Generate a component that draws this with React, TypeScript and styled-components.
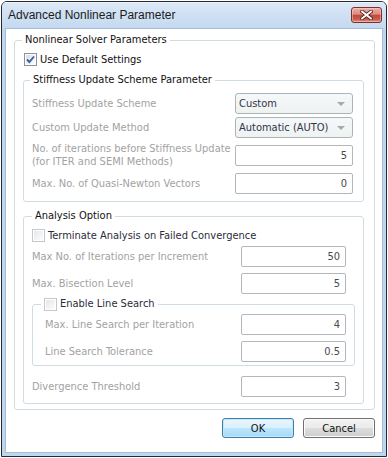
import React from "react";
import styled, { createGlobalStyle } from "styled-components";

const Global = createGlobalStyle`
  html, body { margin: 0; padding: 0; background: #ffffff; }
  #root { width: 388px; height: 458px; }
`;

const UI_FONT = `"DejaVu Sans Condensed", "DejaVu Sans", sans-serif`;

const Window = styled.div`
  box-sizing: border-box;
  width: 386px;
  height: 456px;
  margin: 1px 0 0 1px;
  border: 1px solid #262a30;
  border-radius: 6px 6px 0 0;
  background: #bfd6ef;
  display: flex;
  flex-direction: column;
  overflow: hidden;
`;

const TitleBar = styled.div`
  flex: none;
  height: 26px;
  display: flex;
  align-items: center;
  justify-content: space-between;
  padding: 0 4px 0 6px;
  background: linear-gradient(#dce8f6, #c4d9f0);
  box-shadow: inset 0 1px 0 #eef4fb;
`;

const Title = styled.span`
  font: 12px "Liberation Sans", Arial, sans-serif;
  color: #1b1b1b;
`;

const CloseButton = styled.div`
  box-sizing: border-box;
  width: 31px;
  height: 16px;
  border: 1px solid #7b3028;
  border-radius: 3px;
  background: linear-gradient(#eab0a6 0%, #dd8a7e 45%, #c2463b 50%, #c95a4e 80%, #df9486 100%);
  box-shadow: inset 0 0 0 1px rgba(255, 220, 210, 0.45);
  display: flex;
  align-items: center;
  justify-content: center;
`;

const Frame = styled.div`
  flex: 1;
  display: flex;
  padding: 0 3px 3px 3px;
`;

const Client = styled.div`
  flex: 1;
  box-sizing: border-box;
  border: 1px solid #a7bcd4;
  background: #ffffff;
  display: flex;
  flex-direction: column;
  padding: 4px 7px 0 8px;
  font-family: ${UI_FONT};
  font-size: 11px;
`;

const Group = styled.fieldset<{ $mt?: number; $ml?: number; $mr?: number; $mb?: number }>`
  margin: ${(p) => p.$mt ?? 0}px ${(p) => p.$mr ?? 0}px ${(p) => p.$mb ?? 0}px ${(p) => p.$ml ?? 0}px;
  padding: 0;
  min-width: 0;
  border: 1px solid #d0dce3;
  border-radius: 3px;
`;

const Legend = styled.legend<{ $offset: number }>`
  margin-left: ${(p) => p.$offset}px;
  padding: 0 3px;
  line-height: 14px;
  height: 14px;
  color: #111;
  display: flex;
  align-items: center;
  gap: 3px;
`;

const GroupBody = styled.div<{ $pt: number; $pr: number; $pb: number; $pl: number }>`
  display: flex;
  flex-direction: column;
  padding: ${(p) => p.$pt}px ${(p) => p.$pr}px ${(p) => p.$pb}px ${(p) => p.$pl}px;
`;

const CheckRow = styled.label<{ $mt?: number; $ml?: number; $dim?: boolean }>`
  display: flex;
  align-items: center;
  gap: 3px;
  height: 14px;
  margin-top: ${(p) => p.$mt ?? 0}px;
  margin-left: ${(p) => p.$ml ?? 0}px;
  color: ${(p) => (p.$dim ? "#2c2c3a" : "#111")};
`;

const Box = styled.span<{ $disabled?: boolean }>`
  box-sizing: border-box;
  width: 13px;
  height: 13px;
  flex: none;
  border: 1px solid ${(p) => (p.$disabled ? "#c3c8cc" : "#8e9297")};
  background: ${(p) =>
    p.$disabled
      ? "linear-gradient(135deg, #e1e4e7 0%, #f2f3f4 55%, #ffffff 100%)"
      : "linear-gradient(135deg, #d6dbe2 0%, #eef1f4 55%, #ffffff 100%)"};
  box-shadow: inset 0 0 0 1px #ffffff;
  display: flex;
  align-items: center;
  justify-content: center;
`;

const Row = styled.div<{ $mt?: number; $ctrl: number; $pr?: number; $h?: number }>`
  display: grid;
  grid-template-columns: 1fr ${(p) => p.$ctrl}px;
  align-items: center;
  min-height: ${(p) => p.$h ?? 21}px;
  margin-top: ${(p) => p.$mt ?? 0}px;
  padding-right: ${(p) => p.$pr ?? 0}px;
`;

const Label = styled.span`
  color: #a2a2a2;
  line-height: 13px;
  white-space: pre-line;
`;

const Combo = styled.div`
  box-sizing: border-box;
  height: 21px;
  border: 1px solid #acb5b6;
  border-radius: 3px;
  background: linear-gradient(#f5f8f8, #eef3f2);
  display: flex;
  align-items: center;
  justify-content: space-between;
  padding: 0 7px 0 3px;
  color: #33334a;
`;

const Arrow = styled.span`
  width: 0;
  height: 0;
  border-left: 4px solid transparent;
  border-right: 4px solid transparent;
  border-top: 4px solid #a9a9a9;
`;

const NumBox = styled.input`
  box-sizing: border-box;
  width: 100%;
  height: 21px;
  margin: 0;
  border: 1px solid #b4b7ba;
  border-radius: 2px;
  background: #ffffff;
  padding: 0 5px 0 0;
  text-align: right;
  font-family: ${UI_FONT};
  font-size: 11px;
  color: #4a4a4a;
  outline: none;
`;

const ButtonBar = styled.div`
  display: flex;
  justify-content: flex-end;
  gap: 9px;
  margin-top: 8px;
`;

const Button = styled.button<{ $default?: boolean }>`
  box-sizing: border-box;
  width: 72px;
  height: 20px;
  margin: 0;
  padding: 0;
  border: 1px solid ${(p) => (p.$default ? "#3c7fb1" : "#707070")};
  border-radius: 3px;
  background: ${(p) =>
    p.$default
      ? "linear-gradient(#eaf6fd 0%, #d9f0fc 50%, #bee6fd 50%, #a7d9f5 100%)"
      : "linear-gradient(#f2f2f2 0%, #ebebeb 50%, #dddddd 50%, #cfcfcf 100%)"};
  box-shadow: inset 0 0 0 1px ${(p) => (p.$default ? "#c6e6f8" : "#fcfcfc")};
  font-family: ${UI_FONT};
  font-size: 11px;
  color: #111;
`;

const Check = () => (
  <svg width="9" height="9" viewBox="0 0 9 9">
    <path d="M1 4.5 L3.4 7 L8 1.5" fill="none" stroke="#3d5fa8" strokeWidth="1.9" />
  </svg>
);

const CloseX = () => (
  <svg width="13" height="10" viewBox="0 0 13 10">
    <path d="M2 1.5 L11 8.5 M11 1.5 L2 8.5" stroke="#5b2520" strokeWidth="3.6" strokeLinecap="square" />
    <path d="M2 1.5 L11 8.5 M11 1.5 L2 8.5" stroke="#ffffff" strokeWidth="1.8" strokeLinecap="square" />
  </svg>
);

export default function App() {
  return (
    <>
      <Global />
      <Window>
        <TitleBar>
          <Title>Advanced Nonlinear Parameter</Title>
          <CloseButton>
            <CloseX />
          </CloseButton>
        </TitleBar>
        <Frame>
          <Client>
            <Group>
              <Legend $offset={7}>Nonlinear Solver Parameters</Legend>
              <GroupBody $pt={5} $pr={10} $pb={5} $pl={8}>
                <CheckRow $ml={1}>
                  <Box>
                    <Check />
                  </Box>
                  Use Default Settings
                </CheckRow>

                <Group $mt={7}>
                  <Legend $offset={6}>Stiffness Update Scheme Parameter</Legend>
                  <GroupBody $pt={6} $pr={10} $pb={7} $pl={8}>
                    <Row $ctrl={118}>
                      <Label>Stiffness Update Scheme</Label>
                      <Combo>
                        Custom
                        <Arrow />
                      </Combo>
                    </Row>
                    <Row $ctrl={118} $mt={3}>
                      <Label>Custom Update Method</Label>
                      <Combo>
                        Automatic (AUTO)
                        <Arrow />
                      </Combo>
                    </Row>
                    <Row $ctrl={118} $mt={4} $h={26}>
                      <Label>{"No. of iterations before Stiffness Update\n(for ITER and SEMI Methods)"}</Label>
                      <NumBox readOnly value="5" />
                    </Row>
                    <Row $ctrl={118} $mt={5}>
                      <Label>Max. No. of Quasi-Newton Vectors</Label>
                      <NumBox readOnly value="0" />
                    </Row>
                  </GroupBody>
                </Group>

                <Group $mt={7}>
                  <Legend $offset={8}>Analysis Option</Legend>
                  <GroupBody $pt={5} $pr={8} $pb={6} $pl={8}>
                    <CheckRow $ml={0} $dim>
                      <Box $disabled />
                      Terminate Analysis on Failed Convergence
                    </CheckRow>
                    <Row $ctrl={105} $mt={4} $pr={9}>
                      <Label>Max No. of Iterations per Increment</Label>
                      <NumBox readOnly value="50" />
                    </Row>
                    <Row $ctrl={105} $mt={6} $pr={9}>
                      <Label>Max. Bisection Level</Label>
                      <NumBox readOnly value="5" />
                    </Row>

                    <Group $mt={3}>
                      <Legend $offset={8}>
                        <Box $disabled />
                        <span style={{ color: "#2c2c3a" }}>Enable Line Search</span>
                      </Legend>
                      <GroupBody $pt={3} $pr={8} $pb={3} $pl={12}>
                        <Row $ctrl={105}>
                          <Label>Max. Line Search per Iteration</Label>
                          <NumBox readOnly value="4" />
                        </Row>
                        <Row $ctrl={105} $mt={6}>
                          <Label>Line Search Tolerance</Label>
                          <NumBox readOnly value="0.5" />
                        </Row>
                      </GroupBody>
                    </Group>

                    <Row $ctrl={105} $mt={10} $pr={9}>
                      <Label>Divergence Threshold</Label>
                      <NumBox readOnly value="3" />
                    </Row>
                  </GroupBody>
                </Group>
              </GroupBody>
            </Group>
            <ButtonBar>
              <Button $default>OK</Button>
              <Button>Cancel</Button>
            </ButtonBar>
          </Client>
        </Frame>
      </Window>
    </>
  );
}
